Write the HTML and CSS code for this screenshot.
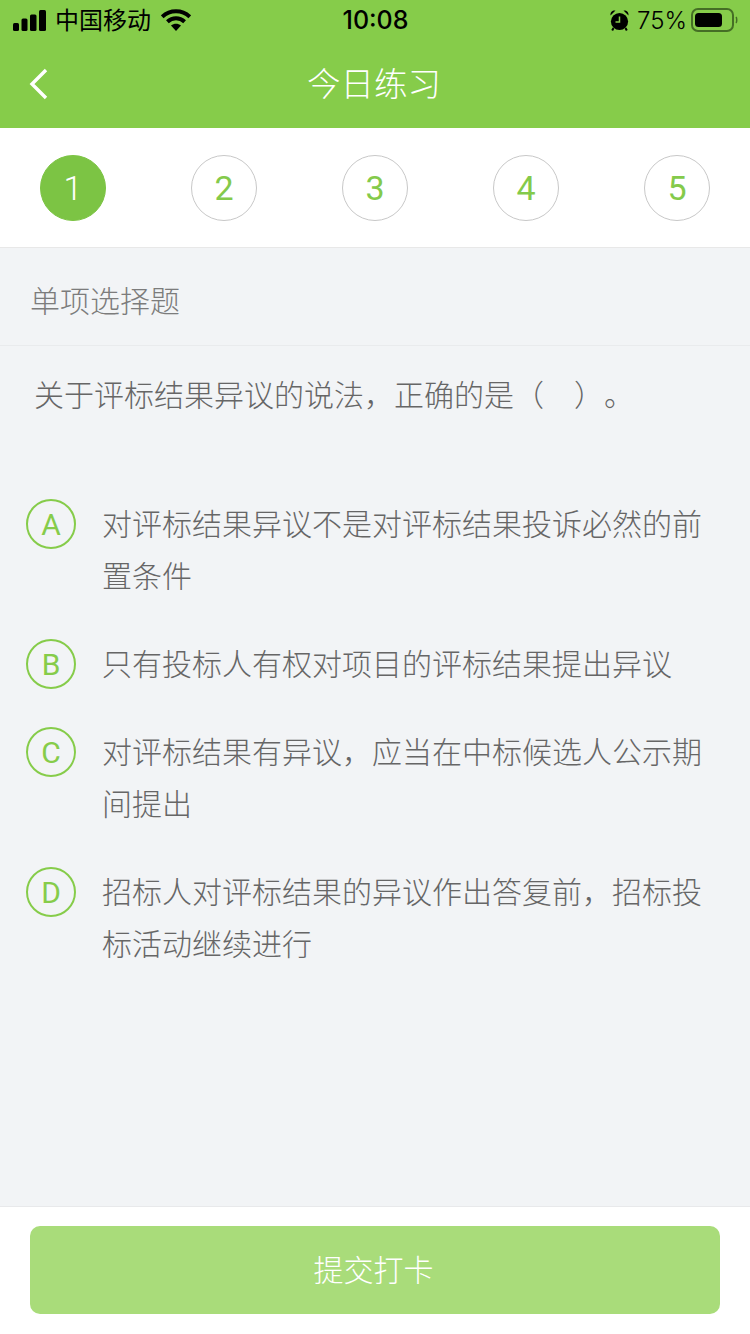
FILE: index.html
```html
<!DOCTYPE html><html lang="zh-CN">
<head>
  <meta charset="UTF-8">
  <title>今日练习</title>
  <link rel="stylesheet" href="styles.css">
</head>
<body>
  <div class="app">
    <div class="header">
      <div class="status">
        <div class="status-left">
          <svg class="signal" width="33" height="21" viewBox="0 0 33 21"><rect x="0" y="13" width="6" height="8" rx="1.5"/><rect x="8.5" y="8.5" width="6" height="12.5" rx="1.5"/><rect x="17" y="4.5" width="6.5" height="16.5" rx="1.5"/><rect x="26" y="0" width="7" height="21" rx="1.5"/></svg>
          <span class="carrier">中国移动</span>
          <svg class="wifi" width="30" height="22" viewBox="0 0 30 22"><path d="M1.2 7.8C9 .4 21 .4 28.8 7.8" fill="none" stroke="#000" stroke-width="4"/><path d="M6.4 12.8C11.4 8.2 18.6 8.2 23.6 12.8" fill="none" stroke="#000" stroke-width="4"/><path d="M10 16.6C13 14 17 14 20 16.6L15 22Z"/></svg>
        </div>
        <div class="time">10:08</div>
        <div class="status-right">
          <svg class="alarm" width="19" height="21" viewBox="0 0 19 21"><circle cx="9.5" cy="11.5" r="8.6"/><path d="M.5 5.5C.2 2 2.5 .2 5.5 .6ZM18.5 5.5C18.8 2 16.5 .2 13.5 .6Z"/><path d="M3.5 18L2.2 20.4M15.5 18L16.8 20.4" stroke="#000" stroke-width="2"/><path d="M9.5 6.5V12H5.5" fill="none" stroke="#86cc4a" stroke-width="1.5"/></svg>
          <span class="percent">75%</span>
          <svg class="battery" width="47" height="24" viewBox="0 0 47 24"><rect x="1" y="1" width="41" height="22" rx="6" fill="none" stroke="#456e25" stroke-width="2"/><rect x="4" y="5" width="27" height="14" rx="3.5"/><path d="M45 9C46 10 46 14 45 15" fill="none" stroke="#456e25" stroke-width="1.5"/></svg>
        </div>
      </div>
      <div class="nav">
        <svg class="back" width="20" height="32" viewBox="0 0 20 32"><path d="M17 2L3 16L17 30" fill="none" stroke="#fff" stroke-width="3.4"/></svg>
        <div class="nav-title">今日练习</div>
      </div>
    </div>

    <div class="steps">
      <div class="step active">1</div>
      <div class="step">2</div>
      <div class="step">3</div>
      <div class="step">4</div>
      <div class="step">5</div>
    </div>

    <div class="main">
      <div class="type">单项选择题</div>
      <div class="question">关于评标结果异议的说法，正确的是（<span class="blank"></span>）。</div>
      <div class="options">
        <div class="option">
          <div class="letter">A</div>
          <div class="option-text">对评标结果异议不是对评标结果投诉必然的前置条件</div>
        </div>
        <div class="option">
          <div class="letter">B</div>
          <div class="option-text">只有投标人有权对项目的评标结果提出异议</div>
        </div>
        <div class="option">
          <div class="letter">C</div>
          <div class="option-text">对评标结果有异议，应当在中标候选人公示期间提出</div>
        </div>
        <div class="option">
          <div class="letter">D</div>
          <div class="option-text">招标人对评标结果的异议作出答复前，招标投标活动继续进行</div>
        </div>
      </div>
    </div>

    <div class="footer">
      <button class="submit">提交打卡</button>
    </div>
  </div>
</body>
</html>
```

FILE: styles.css
```css
* {
  margin: 0;
  padding: 0;
  box-sizing: border-box;
  font-family: "Roboto", "Noto Sans CJK SC", sans-serif;
}

body {
  background-color: #f2f4f6;
}

.app {
  width: 750px;
  height: 1334px;
  display: flex;
  flex-direction: column;
  overflow: hidden;
}

.header {
  height: 128px;
  background-color: #86cc4a;
}

.status {
  height: 40px;
  padding: 0 12px 0 13px;
  display: flex;
  align-items: center;
  justify-content: space-between;
  color: #000;
}

.status-left {
  width: 240px;
  display: flex;
  align-items: center;
}

.carrier {
  margin: 0 0 4px 9px;
  font-size: 24px;
}

.wifi {
  margin-left: 10px;
}

.time {
  font-family: "Inter", sans-serif;
  font-size: 25px;
  font-weight: 500;
}

.status-right {
  width: 240px;
  display: flex;
  align-items: center;
  justify-content: flex-end;
}

.percent {
  margin: 0 4px 0 8px;
  font-family: "Inter", sans-serif;
  font-size: 24px;
  font-weight: 300;
}

.nav {
  height: 88px;
  padding: 0 28px 0 29px;
  display: flex;
  align-items: center;
  position: relative;
}

.nav-title {
  position: absolute;
  left: 0;
  right: 2px;
  bottom: 22px;
  text-align: center;
  color: #fff;
  font-size: 33.5px;
  font-weight: 300;
}

.steps {
  height: 120px;
  padding: 0 40px;
  background-color: #fff;
  border-bottom: 1px solid #e8e8e8;
  display: flex;
  align-items: center;
  justify-content: space-between;
}

.step {
  width: 66px;
  height: 66px;
  border: 1px solid #c8c8c8;
  border-radius: 50%;
  display: flex;
  align-items: center;
  justify-content: center;
  color: #84ca4b;
  font-size: 34px;
}

.step.active {
  background-color: #7cc444;
  border-color: #7cc444;
  color: #fff;
  font-weight: 300;
}

.main {
  flex: 1;
}

.type {
  height: 98px;
  padding: 4px 0 0 30px;
  border-bottom: 1px solid #e9ebed;
  display: flex;
  align-items: center;
  color: #7c7c7c;
  font-size: 30px;
  font-weight: 300;
}

.question {
  padding: 24px 34px 0;
  color: #666;
  font-size: 30px;
  line-height: 52px;
  font-weight: 300;
  text-spacing-trim: space-all;
}

.blank {
  display: inline-block;
  width: 30px;
}

.options {
  margin-top: 77px;
  padding: 0 48px 0 26px;
  display: flex;
  flex-direction: column;
  gap: 36px;
}

.option {
  display: flex;
  align-items: flex-start;
}

.letter {
  flex: none;
  width: 50px;
  height: 50px;
  margin-right: 26px;
  border: 2px solid #86cc4a;
  border-radius: 50%;
  display: flex;
  align-items: center;
  justify-content: center;
  color: #86cc4a;
  font-size: 30px;
}

.option-text {
  color: #666;
  font-size: 30px;
  line-height: 52px;
  font-weight: 300;
  text-spacing-trim: space-all;
}

.footer {
  height: 128px;
  padding: 19px 30px;
  background-color: #fff;
  border-top: 1px solid #e8e9eb;
}

.submit {
  width: 100%;
  height: 88px;
  padding: 0 3px 5px 0;
  border: none;
  border-radius: 10px;
  background-color: #a9dc7a;
  color: #fff;
  font-size: 30px;
  font-weight: 300;
}
```
